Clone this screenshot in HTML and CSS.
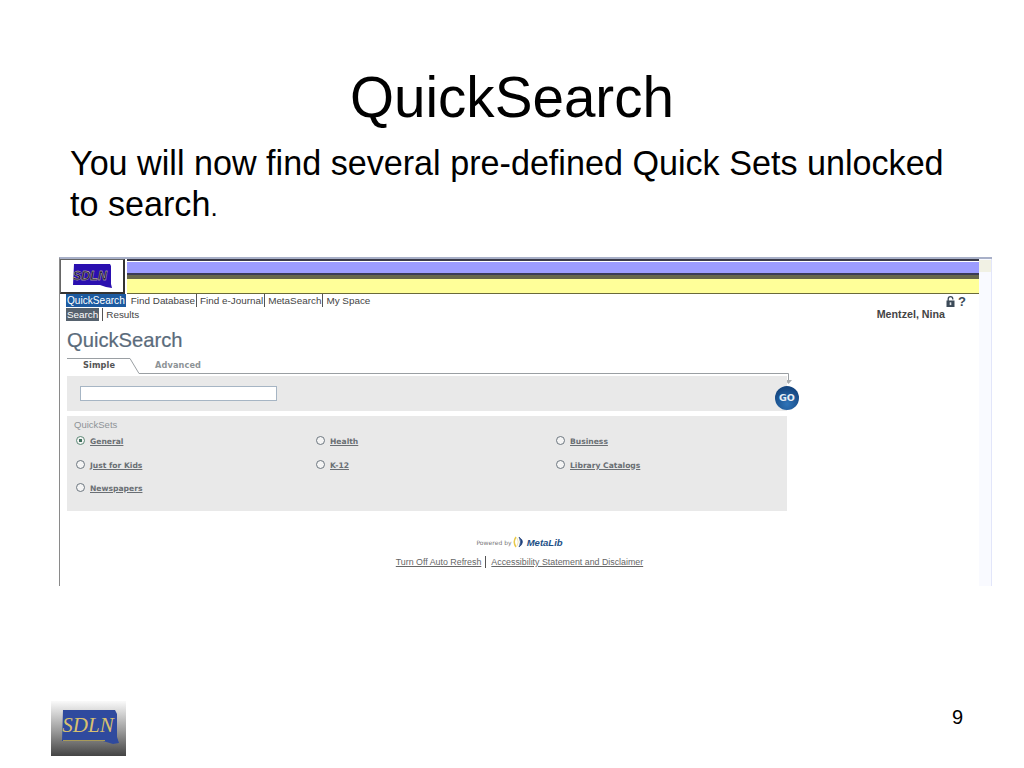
FILE: index.html
```html
<!DOCTYPE html>
<html lang="en">
<head>
    <meta charset="UTF-8">
    <title>QuickSearch</title>
    <link rel="stylesheet" href="styles.css">
</head>
<body>
    <div class="slide">
        <h1>QuickSearch</h1>
        <p class="lead">You will now find several pre-defined Quick Sets unlocked<br>to search<span class="dot">.</span></p>

        <div class="shot">
            <div class="page">
                <div class="banner">
                    <div class="logo-box">
                        <svg width="42" height="26" viewBox="0 0 42 26">
                            <path d="M3 1 L39 1 L40 3 V21 L41 25 L35 24 L29 22 L2 22 Z" fill="#2a0fb0"/>
                            <text x="2" y="17" class="logo-small">SDLN</text>
                        </svg>
                    </div>
                    <div class="bars">
                        <div class="bar-blue"></div>
                        <div class="bar-yellow"></div>
                    </div>
                </div>

                <div class="nav-row">
                    <div class="nav">
                        <a class="on">QuickSearch</a><a>Find Database</a><a>Find e-Journal</a><a>MetaSearch</a><a>My Space</a>
                    </div>
                    <div class="tools">
                        <svg width="9" height="11" viewBox="0 0 9 11">
                            <path d="M2.200 5 V3 a2.300 2.300 0 0 1 4.600 0 V3.500" fill="none" stroke="#3c4a58" stroke-width="1.300"/>
                            <rect x="0.500" y="4.500" width="8" height="6.500" fill="#3c4a58"/>
                            <rect x="3.700" y="6.300" width="1.600" height="2.800" fill="#dfe3e6"/>
                        </svg>
                        <span class="help">?</span>
                    </div>
                </div>
                <div class="sub-row">
                    <div class="subnav"><a class="on">Search</a><a>Results</a></div>
                    <div class="user">Mentzel, Nina</div>
                </div>

                <h2>QuickSearch</h2>

                <div class="tabs">
                    <svg class="tab-line" width="725" height="28" viewBox="0 0 725 28">
                        <path d="M0 1.500 H63 L72 16.500 H721.500 V24" fill="none" stroke="#9a9fa3"/>
                        <path d="M718 23 H725 L721.500 27 Z" fill="#a9adb0"/>
                    </svg>
                    <span class="tab tab-on">Simple</span>
                    <span class="tab">Advanced</span>
                </div>

                <div class="search-panel">
                    <div class="search-box"></div>
                    <div class="go">GO</div>
                </div>

                <div class="sets">
                    <div class="sets-title">QuickSets</div>
                    <div class="sets-grid">
                        <label class="set"><i class="radio checked"></i><u>General</u></label>
                        <label class="set"><i class="radio"></i><u>Health</u></label>
                        <label class="set"><i class="radio"></i><u>Business</u></label>
                        <label class="set"><i class="radio"></i><u>Just for Kids</u></label>
                        <label class="set"><i class="radio"></i><u>K-12</u></label>
                        <label class="set"><i class="radio"></i><u>Library Catalogs</u></label>
                        <label class="set"><i class="radio"></i><u>Newspapers</u></label>
                    </div>
                </div>

                <div class="powered">
                    <span class="powered-by">Powered by</span>
                    <svg width="13" height="12" viewBox="0 0 13 12">
                        <path d="M3 1 Q-0.500 6 3 11" fill="none" stroke="#e8c94a" stroke-width="1.500"/>
                        <path d="M6 1 Q9 6 6 11 Q13 6 6 1 Z" fill="#1d3f7c" stroke="#1d3f7c" stroke-width="0.600"/>
                        <path d="M4 2 Q6.500 6 4 10" fill="none" stroke="#f3e7ae"/>
                    </svg>
                    <span class="metalib">MetaLib</span>
                </div>
                <div class="foot-links"><a>Turn Off Auto Refresh</a><a>Accessibility Statement and Disclaimer</a></div>
            </div>
            <div class="scrollbar"><div class="scroll-up"></div></div>
        </div>

        <div class="footer">
            <div class="sdln">
                <svg width="75" height="55" viewBox="0 0 75 55">
                    <path d="M12 9 H64 L66 13 V36 L68 42 L62 43 L52 40 H11 Z" fill="#2f4a9e"/>
                    <text x="37" y="31" class="logo-big">SDLN</text>
                    <rect x="12" y="39" width="42" height="1" fill="#a89a5a"/>
                </svg>
            </div>
            <div class="num">9</div>
        </div>
    </div>
</body>
</html>
```

FILE: styles.css
```css
body {
    margin: 0;
    font-family: "Liberation Sans", Arial, sans-serif;
    background: #fff;
    color: #000;
}
.slide {
    width: 1024px;
    height: 768px;
    display: flex;
    flex-direction: column;
    overflow: hidden;
}
h1 {
    margin: 67px 0 0;
    font-size: 56.6px;
    line-height: 62px;
    font-weight: normal;
    text-align: center;
}
.lead {
    margin: 14px 0 0 70px;
    font-size: 34.15px;
    line-height: 41px;
}
.dot {
    font-size: 26px;
}

/* embedded screenshot */
.shot {
    margin: 29px 0 0 59px;
    width: 933px;
    height: 329px;
    display: flex;
    border-top: 2px solid #a8b0c8;
    border-left: 1px solid #8a8a8a;
    box-sizing: border-box;
}
.page {
    width: 919px;
    display: flex;
    flex-direction: column;
    font-size: 9.9px;
    color: #444;
}
.scrollbar {
    width: 13px;
    background: #f9faff;
    border-right: 1px solid #e2e6fa;
    box-sizing: border-box;
}
.scroll-up {
    height: 12px;
    margin-top: 1px;
    background: #f1f1e4;
}
.banner {
    display: flex;
    height: 34px;
}
.logo-box {
    width: 62px;
    height: 32px;
    border: 1px solid #666;
    border-right: 2px solid #333;
    border-bottom: 2px solid #333;
    display: flex;
    align-items: center;
    justify-content: center;
    background: #fff;
}
.logo-small {
    font-size: 12.5px;
    font-style: italic;
    font-weight: bold;
    fill: #0e0a40;
    stroke: #f0e2a0;
    stroke-width: 0.35px;
    font-family: "Liberation Sans", sans-serif;
}
.bars {
    flex: 1;
    margin-left: 2px;
    border-top: 2px solid #3a3a48;
}
.bar-blue {
    height: 11px;
    margin-top: 1px;
    background: #9c9cff;
    border-bottom: 2px solid #3a3a55;
}
.bar-yellow {
    height: 14px;
    background: #ffff99;
    border-top: 4px solid #66664a;
    border-bottom: 1px solid #6a6a3a;
}
.nav-row,
.sub-row {
    display: flex;
    justify-content: space-between;
    height: 14px;
    line-height: 13px;
    padding-left: 6px;
}
.nav-row {
    margin-top: 1px;
}
.nav a,
.subnav a {
    display: inline-block;
    padding: 0 1px 0 3px;
    border-left: 1px solid #555;
    color: #444;
}
.nav a.on {
    background: #1c5aa0;
    color: #fff;
    border: 0;
    padding: 0 1px;
    margin-right: 3px;
    font-size: 10.1px;
}
.nav a.on + a {
    border-left: 0;
    padding-left: 2px;
}
.subnav a.on {
    background: #56626e;
    color: #fff;
    border: 0;
    padding: 0 1px;
    margin-right: 3px;
}
.tools {
    display: flex;
    align-items: center;
    gap: 3px;
    padding-right: 13px;
}
.help {
    font-weight: bold;
    font-size: 13px;
    color: #3c4a58;
}
.user {
    font-size: 10.7px;
    font-weight: bold;
    color: #444;
    padding-right: 34px;
}
h2 {
    margin: 6px 0 0 7px;
    font-size: 20.2px;
    line-height: 24px;
    font-weight: normal;
    color: #5a6b7b;
    -webkit-text-stroke: 0.2px #5a6b7b;
}
.tabs {
    position: relative;
    height: 19px;
    margin: 5px 0 0 7px;
    display: flex;
    line-height: 13px;
    font-family: "DejaVu Sans", sans-serif;
    font-size: 8.2px;
    font-weight: bold;
    letter-spacing: 0.1px;
    color: #8d9396;
}
.tab-line {
    position: absolute;
    left: 0;
    top: 0;
}
.tab {
    margin-left: 40px;
    margin-top: 2px;
}
.tab-on {
    margin-left: 16px;
    color: #555;
}
.search-panel {
    position: relative;
    width: 720px;
    height: 35px;
    margin-left: 7px;
    background: #e9e9e9;
    padding: 10px 13px;
    box-sizing: border-box;
}
.search-box {
    width: 197px;
    height: 15px;
    background: #fff;
    border: 1px solid #a6b5c4;
    box-sizing: border-box;
}
.go {
    position: absolute;
    left: 708px;
    top: 10px;
    width: 24px;
    height: 24px;
    border-radius: 50%;
    background: radial-gradient(circle at 50% 75%, #2f74b8, #14457f 75%);
    color: #e8eef5;
    font-family: "DejaVu Sans", sans-serif;
    font-size: 9.5px;
    font-weight: bold;
    line-height: 24px;
    text-align: center;
}
.sets {
    width: 720px;
    height: 95px;
    margin: 5px 0 0 7px;
    padding: 3px 9px 0 7px;
    background: #e9e9e9;
    box-sizing: border-box;
    font-family: "DejaVu Sans", sans-serif;
    font-size: 7.6px;
    color: #6a6f74;
}
.sets-title {
    height: 11px;
    line-height: 11px;
    font-family: "Liberation Sans", sans-serif;
    font-size: 9.5px;
    color: #8e9397;
}
.sets-grid {
    display: grid;
    grid-template-columns: 240px 240px 1fr;
    grid-auto-rows: 23.5px;
    line-height: 13px;
    padding: 5px 0 0 2px;
}
.set {
    display: flex;
    align-items: flex-start;
    gap: 5px;
    font-weight: bold;
}
.radio {
    display: block;
    width: 9px;
    height: 9px;
    margin-top: 1px;
    border: 1px solid #6d7780;
    border-radius: 50%;
    background: #f4f4f4;
    box-sizing: border-box;
}
.radio.checked {
    border-color: #5f8a78;
    background: radial-gradient(circle, #3f6f5c 0 1.5px, #f4f4f4 2px);
}
.powered {
    margin-top: 24px;
    height: 14px;
    display: flex;
    align-items: center;
    justify-content: center;
    gap: 1px;
}
.powered-by {
    font-family: "DejaVu Sans", sans-serif;
    font-size: 6px;
    letter-spacing: 0.05px;
    color: #777;
}
.metalib {
    font-size: 9.5px;
    font-weight: bold;
    font-style: italic;
    color: #1d4f86;
}
.foot-links {
    margin-top: 7px;
    display: flex;
    justify-content: center;
    font-size: 8.85px;
    line-height: 12px;
    color: #666;
    text-decoration: underline;
}
.foot-links a + a {
    margin-left: 4px;
    padding-left: 5px;
    border-left: 1px solid #555;
}

/* slide footer */
.footer {
    flex: 1;
    display: flex;
    justify-content: space-between;
    padding: 115px 61px 0 51px;
}
.sdln {
    width: 75px;
    height: 55px;
    background: linear-gradient(#fafafa, #9a9a9a 55%, #444);
}
.logo-big {
    font-family: "Liberation Serif", serif;
    font-size: 21px;
    font-style: italic;
    fill: #d8c070;
    text-anchor: middle;
}
.num {
    font-size: 20px;
    line-height: 24px;
    margin-top: 4px;
}
```
